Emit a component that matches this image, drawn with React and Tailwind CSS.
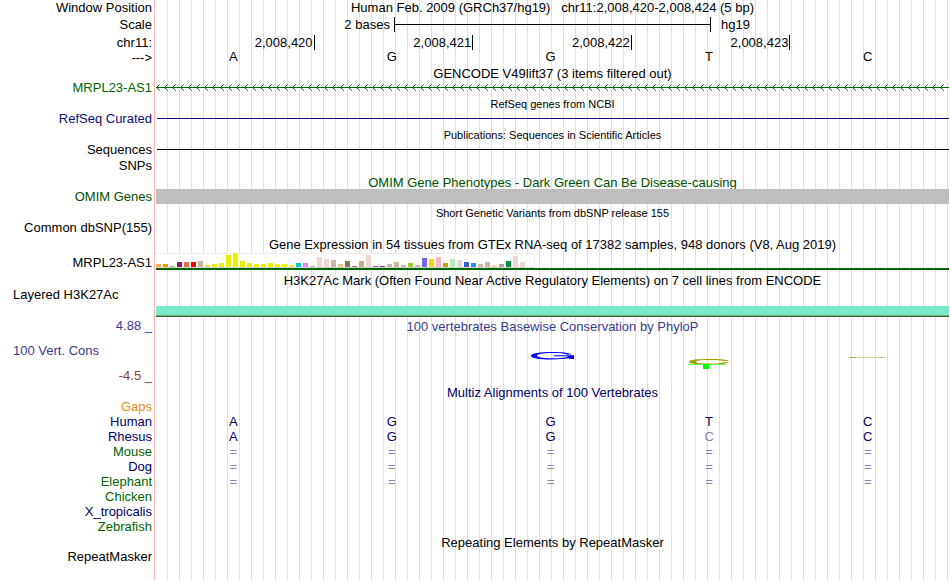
const expression = [
  ['#ffaa56', 3], ['#ee9a00', 3], ['#8fbc8f', 1], ['#8b1c62', 5], ['#ee6a50', 5], ['#ff0000', 5],
  ['#cdb79e', 6], ['#eeee00', 2], ['#eeee00', 3], ['#eeee00', 4], ['#eeee00', 12], ['#eeee00', 14],
  ['#eeee00', 6], ['#eeee00', 4], ['#eeee00', 3], ['#eeee00', 3], ['#eeee00', 4], ['#eeee00', 3],
  ['#eeee00', 3], ['#eeee00', 2], ['#00cdcd', 4], ['#ee82ee', 4], ['#9ac0cd', 1], ['#eed5d2', 10],
  ['#eed5d2', 8], ['#cdb79e', 7], ['#eec591', 3], ['#8b7355', 6], ['#8b7355', 1], ['#cdaa7d', 6],
  ['#eed5d2', 12], ['#b452cd', 1], ['#7a378b', 1], ['#cdb79e', 3], ['#cdb79e', 5], ['#cdb79e', 2],
  ['#9acd32', 4], ['#cdb79e', 2], ['#7a67ee', 9], ['#ffd700', 8], ['#ffb6c1', 10], ['#cd9b1d', 4],
  ['#b4eeb4', 8], ['#d9d9d9', 7], ['#3a5fcd', 5], ['#1e90ff', 4], ['#cdb79e', 3], ['#cdb79e', 5],
  ['#ffd39b', 2], ['#a6a6a6', 3], ['#008b45', 6], ['#eed5d2', 11], ['#eed5d2', 5], ['#ff00ff', 0],
];

const alignments = [
  { name: 'Gaps', color: 'text-[#e68c14]', bases: '' },
  { name: 'Human', color: 'text-[#000064]', bases: 'AGGTC' },
  { name: 'Rhesus', color: 'text-[#000064]', bases: 'AGGcC' },
  { name: 'Mouse', color: 'text-[#006400]', bases: '=====' },
  { name: 'Dog', color: 'text-[#000064]', bases: '=====' },
  { name: 'Elephant', color: 'text-[#006400]', bases: '=====' },
  { name: 'Chicken', color: 'text-[#006400]', bases: '' },
  { name: 'X_tropicalis', color: 'text-[#000064]', bases: '' },
  { name: 'Zebrafish', color: 'text-[#006400]', bases: '' },
];

const positions = ['2,008,420', '2,008,421', '2,008,422', '2,008,423'];

function Row({ label, size = 'h-[15px]', align = 'items-center', labelClass = '', className = '', children }) {
  return (
    <div className={`flex shrink-0 ${size}`}>
      <div className={`flex w-[155px] shrink-0 justify-end border-r border-[#ffb4b4] pr-0.5 ${align} ${labelClass}`}>
        {label}
      </div>
      <div className={`ml-px flex min-w-0 flex-1 bg-[repeating-linear-gradient(to_right,transparent_0_11px,#dcdcfa_11px_12px)] ${align} ${className}`}>
        {children}
      </div>
    </div>
  );
}

function Title({ label, labelClass, size = 'h-4', className = 'leading-3', children }) {
  return (
    <Row label={label} labelClass={labelClass} size={size} align="items-end" className="justify-center">
      <h2 className={className}>{children}</h2>
    </Row>
  );
}

function Bases({ bases }) {
  return (
    <div className="grid w-full grid-cols-5 text-center">
      {bases.split('').map((base, i) => (
        <span key={i} className={base === '=' || base === 'c' ? 'pr-1 text-[#8282b4]' : 'pr-1'}>
          {base.toUpperCase()}
        </span>
      ))}
    </div>
  );
}

function GeneArrows() {
  return (
    <svg className="h-[15px] w-full" shapeRendering="crispEdges" aria-hidden="true">
      <defs>
        <pattern id="strand" width="8" height="15" patternUnits="userSpaceOnUse">
          <path d="M1 6h1v1h-1zM1 8h1v1h-1zM2 5h1v1h-1zM2 9h1v1h-1z" fill="#006400" />
          <path d="M3 4h1v1h-1zM3 10h1v1h-1z" fill="#64a064" />
        </pattern>
      </defs>
      <rect width="100%" height="15" fill="url(#strand)" />
      <rect y="7" width="100%" height="1" fill="#006400" />
    </svg>
  );
}

function Expression() {
  return (
    <div className="w-full">
      <div className="flex h-[15px] w-[379px] items-end gap-0.5 border border-l-0 border-[#eeeeee] border-b-[#d2d2d2] bg-white">
        {expression.map(([color, height], i) => (
          <span key={i} className="w-[5px] shrink-0" style={{ height, backgroundColor: color }} />
        ))}
      </div>
      <div className="h-0.5 bg-[#006400]" />
    </div>
  );
}

// Sequence logo: letter height follows the score, so most are nearly flat
function Conservation() {
  return (
    <div className="grid w-full grid-cols-5">
      <span />
      <span />
      <svg className="mx-auto h-[52px] w-[45px]" aria-hidden="true">
        <path
          fill="#0000ff"
          fillRule="evenodd"
          d="M42 21.5h-5C34 20.3 29 19.9 22 19.9 13 19.9 7 20.9 7 22.6 7 24.4 13 25.3 22 25.3 30 25.3 37 24.7 38 23.2H24v-1h20V26h-4.500l-1-1C35 26 29 26.400 22 26.400 9 26.400 1 25.200 1 22.700 1 20.300 10 19 22 19 33 19 40 19.900 42 21.500z"
        />
      </svg>
      <svg className="mx-auto h-[52px] w-[45px] overflow-visible" aria-hidden="true">
        <path
          fill="#a0a000"
          fillRule="evenodd"
          d="M40 28h-6c-2-.7-6-1.100-13-1.100-9 0-14 .6-14 1.800s5 1.900 14 1.900c7 0 11-.4 13-1.300h6c-2 1.500-9 2.200-19 2.200C9 31.500 0 30.700 0 28.700S9 26 21 26c11 0 17 .6 19 2z"
        />
        <rect x="-1" y="31" width="38" height="1" fill="#5aff5a" />
        <rect x="14" y="31" width="6" height="5" fill="#00ff00" />
      </svg>
      <svg className="mx-auto h-[52px] w-[45px]" shapeRendering="crispEdges" aria-hidden="true">
        <rect x="2" y="24" width="37" height="1" fill="#d2d2a0" />
        <rect x="3" y="24" width="6" height="1" fill="#aaaa46" />
        <rect x="31" y="24" width="5" height="1" fill="#c3c387" />
      </svg>
    </div>
  );
}

export default function App() {
  return (
    <main className="flex min-h-screen flex-col overflow-hidden bg-white pr-px font-['Liberation_Sans',Arial,sans-serif] text-[13px] leading-[15px] whitespace-nowrap text-black">
      <Row label="Window Position" size="h-[17px]" align="items-start" className="justify-center">
        <h1 className="whitespace-pre">{'Human Feb. 2009 (GRCh37/hg19)   chr11:2,008,420-2,008,424 (5 bp)'}</h1>
      </Row>
      <Row label="Scale" size="h-[17px]" align="items-start">
        <span className="w-[30%] pr-1 text-right">2 bases</span>
        <span className="flex h-[15px] w-[40%] items-center border-x border-black">
          <span className="h-px w-full bg-black" />
        </span>
        <span className="pl-2.5">hg19</span>
      </Row>
      <Row label="chr11:" size="h-4">
        <div className="grid w-full grid-cols-5 text-right">
          {positions.map((position) => (
            <span key={position} className="border-r border-black pr-px">{position}</span>
          ))}
        </div>
      </Row>
      <Row label="--->" size="h-3.5" className="leading-3">
        <Bases bases="AGGTC" />
      </Row>

      <Title>GENCODE V49lift37 (3 items filtered out)</Title>
      <Row label="MRPL23-AS1" labelClass="text-[#006400]">
        <GeneArrows />
      </Row>

      <Title className="text-[11px] leading-[14px]">RefSeq genes from NCBI</Title>
      <Row label="RefSeq Curated" labelClass="text-[#0c0c78]">
        <span className="ml-px h-px w-full bg-[#0c0c78]" />
      </Row>

      <Title className="text-[11px] leading-[14px]">Publications: Sequences in Scientific Articles</Title>
      <Row label="Sequences">
        <span className="ml-px h-px w-full bg-black" />
      </Row>
      <Row label="SNPs" size="h-4" />

      <Title className="leading-3 text-[#005000]">OMIM Gene Phenotypes - Dark Green Can Be Disease-causing</Title>
      <Row label="OMIM Genes" labelClass="text-[#005000]">
        <span className="relative h-[15px] w-full bg-[#bebebe]" />
      </Row>

      <Title className="text-[11px] leading-[14px]">Short Genetic Variants from dbSNP release 155</Title>
      <Row label="Common dbSNP(155)" />

      <Title>Gene Expression in 54 tissues from GTEx RNA-seq of 17382 samples, 948 donors (V8, Aug 2019)</Title>
      <Row label="MRPL23-AS1" size="h-[19px]" align="items-end">
        <Expression />
      </Row>

      <Title size="h-[17px]">H3K27Ac Mark (Often Found Near Active Regulatory Elements) on 7 cell lines from ENCODE</Title>
      <Row label={<span className="w-full pl-[13px]">Layered H3K27Ac</span>} size="h-[30px]" labelClass="pb-[15px]" align="items-end">
        <span className="h-[11px] w-full border-b border-[#32645a] bg-[#78ebcd]">
          <span className="mt-[9px] block h-px bg-[#6eb45a]" />
        </span>
      </Row>

      <Title label="4.88 _" labelClass="text-[#3c3c8c]" className="leading-3 text-[#3c3c8c]">
        100 vertebrates Basewise Conservation by PhyloP
      </Title>
      <Row
        label={
          <div className="flex w-full flex-col gap-2.5 pt-2.5 pl-[13px]">
            <span className="text-[#3c3c8c]">100 Vert. Cons</span>
            <span className="text-right text-[#8c3c3c]">-4.5 _</span>
          </div>
        }
        size="h-[52px]"
        align="items-start"
      >
        <Conservation />
      </Row>

      <Title size="h-3.5" className="leading-3 text-[#000064]">Multiz Alignments of 100 Vertebrates</Title>
      {alignments.map(({ name, color, bases }) => (
        <Row key={name} label={name} labelClass={color} className="text-[#000064]">
          <Bases bases={bases} />
        </Row>
      ))}

      <Title size="h-[15px]">Repeating Elements by RepeatMasker</Title>
      <Row label="RepeatMasker" />
      <Row size="grow" />
    </main>
  );
}
